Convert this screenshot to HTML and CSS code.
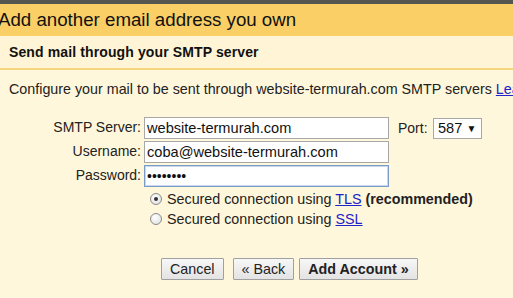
FILE: index.html
```html
<!DOCTYPE html>
<html>
<head>
<meta charset="utf-8">
<link rel="stylesheet" href="styles.css">
</head>
<body>
<div class="topbar"></div>
<div class="header">Add another email address you own</div>
<div class="subheader">Send mail through your SMTP server</div>
<div class="content">
  <p class="desc">Configure your mail to be sent through website-termurah.com SMTP servers <a href="#">Learn more</a></p>
  <div class="form">
    <label class="lbl">SMTP Server:</label>
    <div class="row">
      <div class="input">website-termurah.com</div>
      <span class="port-lbl">Port:</span>
      <div class="select">587 <span class="arrow">&#9660;</span></div>
    </div>
    <label class="lbl">Username:</label>
    <div class="row"><div class="input">coba@website-termurah.com</div></div>
    <label class="lbl">Password:</label>
    <div class="row"><div class="input focus"><span class="dots">&#8226;&#8226;&#8226;&#8226;&#8226;&#8226;&#8226;&#8226;</span></div></div>
  </div>
  <div class="radios">
    <div class="radio-row"><span class="radio checked"></span><span>Secured connection using <a href="#">TLS</a> <b>(recommended)</b></span></div>
    <div class="radio-row"><span class="radio"></span><span>Secured connection using <a href="#">SSL</a></span></div>
  </div>
  <div class="buttons">
    <button class="btn">Cancel</button>
    <button class="btn">&laquo; Back</button>
    <button class="btn primary">Add Account &raquo;</button>
  </div>
</div>
</body>
</html>
```
FILE: styles.css
```css
html, body {
  margin: 0;
  padding: 0;
}
body {
  width: 513px;
  height: 298px;
  overflow: hidden;
  background: #fff7dc;
  font-family: "Liberation Sans", Arial, sans-serif;
  color: #222;
}
.topbar {
  height: 4px;
  background: #555750;
}
.header {
  height: 32px;
  background: #f9cf66;
  font-size: 18.7px;
  line-height: 32px;
  text-indent: -2px;
  color: #111;
  white-space: nowrap;
  overflow: hidden;
}
.subheader {
  height: 32px;
  background: #fff4d5;
  border-bottom: 2px solid #f4d680;
  font-size: 14px;
  font-weight: bold;
  letter-spacing: 0.12px;
  line-height: 32px;
  padding-left: 9px;
  color: #111;
}
.content {
  padding-left: 9px;
}
.desc {
  margin: 0;
  padding-top: 11px;
  font-size: 14.3px;
  line-height: 16px;
  white-space: nowrap;
  overflow: hidden;
}
a {
  color: #2222cc;
  text-decoration: underline;
}
.form {
  margin-top: 20px;
  display: grid;
  grid-template-columns: 132px auto;
  column-gap: 3px;
  row-gap: 2px;
  font-size: 14px;
}
.lbl {
  text-align: right;
  line-height: 21px;
  color: #222;
}
.row {
  display: flex;
  align-items: center;
}
.input {
  box-sizing: border-box;
  width: 245px;
  height: 22px;
  border: 1px solid #a8a8a8;
  background: #fff;
  font-size: 14.6px;
  line-height: 20px;
  padding-left: 2px;
  color: #111;
}
.input.focus {
  border-color: #7a9cc8;
  box-shadow: inset 0 0 0 1px #c7d8ee;
}
.dots {
  font-size: 14px;
}
.port-lbl {
  margin-left: 9px;
  width: 35px;
}
.select {
  box-sizing: border-box;
  width: 49px;
  height: 21px;
  border: 1px solid #a8a8a8;
  background: #fff;
  font-size: 14.6px;
  line-height: 19px;
  padding-left: 4px;
  color: #111;
}
.arrow {
  font-size: 10px;
  vertical-align: 1px;
}
.radios {
  margin-top: 2px;
  padding-left: 141px;
  font-size: 14.3px;
}
.radio-row {
  display: flex;
  align-items: center;
  height: 20px;
  gap: 5px;
}
.radio {
  box-sizing: border-box;
  width: 12px;
  height: 12px;
  border-radius: 50%;
  border: 1px solid #8a8a8a;
  background: radial-gradient(circle at 40% 35%, #fff, #dcdcdc);
  position: relative;
}
.radio.checked::after {
  content: "";
  position: absolute;
  left: 3px;
  top: 3px;
  width: 4px;
  height: 4px;
  border-radius: 50%;
  background: #333;
}
.buttons {
  margin-top: 29px;
  padding-left: 152px;
  display: flex;
}
.btn {
  box-sizing: border-box;
  height: 22px;
  padding: 0 8px;
  border: 1px solid #a0a0a0;
  border-radius: 1px;
  background: linear-gradient(#f7f7f7, #e3e3e3);
  font-family: "Liberation Sans", Arial, sans-serif;
  font-size: 14.3px;
  color: #222;
  margin-right: 10px;
}
.btn:nth-child(2) {
  margin-left: -1px;
  margin-right: 5px;
}
.btn.primary {
  font-weight: bold;
  padding: 0 8px;
}
```
